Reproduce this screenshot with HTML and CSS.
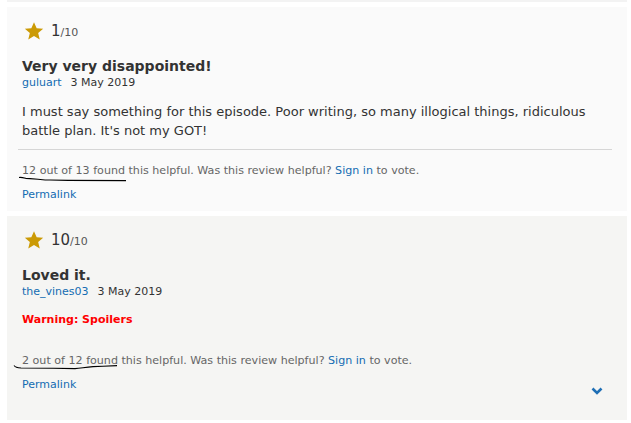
FILE: index.html
```html
<!DOCTYPE html>
<html>
<head>
<meta charset="utf-8">
<link rel="stylesheet" href="styles.css">
</head>
<body>
<div class="page">
  <div class="strip"></div>
  <div class="review review-odd">
    <div class="rating">
      <svg class="star" viewBox="0 0 24 24" width="20" height="20"><path d="M12 1.5l3.2 7.2 7.8.6-6 5.1 1.9 7.7L12 18l-6.9 4.1 1.9-7.7-6-5.1 7.8-.6z" fill="#cb9a05"/></svg>
      <span class="score">1</span><span class="outof">/10</span>
    </div>
    <div class="title">Very very disappointed!</div>
    <div class="meta"><a class="author">guluart</a><span class="date">3 May 2019</span></div>
    <div class="body">I must say something for this episode. Poor writing, so many illogical things, ridiculous battle plan. It's not my GOT!</div>
    <div class="divider"></div>
    <div class="helpful">12 out of 13 found this helpful. Was this review helpful? <a class="link">Sign in</a> to vote.
      <svg class="scribble s1" width="120" height="10" viewBox="0 0 120 10"><path d="M1 2.5 C3 2 5 2.6 8 3.4 L12 3.6 L20 4.2 C24 4.6 26 5 32 5 L50 5.4 L108 5.6" fill="none" stroke="#000" stroke-width="1.1"/></svg>
    </div>
    <div class="footer"><a class="link permalink">Permalink</a></div>
  </div>
  <div class="review review-even">
    <div class="rating">
      <svg class="star" viewBox="0 0 24 24" width="20" height="20"><path d="M12 1.5l3.2 7.2 7.8.6-6 5.1 1.9 7.7L12 18l-6.9 4.1 1.9-7.7-6-5.1 7.8-.6z" fill="#cb9a05"/></svg>
      <span class="score">10</span><span class="outof">/10</span>
    </div>
    <div class="title">Loved it.</div>
    <div class="meta"><a class="author">the_vines03</a><span class="date">3 May 2019</span></div>
    <div class="spoiler">Warning: Spoilers</div>
    <div class="helpful spaced">2 out of 12 found this helpful. Was this review helpful? <a class="link">Sign in</a> to vote.
      <svg class="scribble s2" width="110" height="10" viewBox="0 0 110 10"><path d="M1 1.5 C2 3 4 3.8 8 4 L40 4.3 L62 4.6 C68 4.4 72 3 80 2.6 L90 2.2 L104 1.6" fill="none" stroke="#000" stroke-width="1.1"/></svg>
    </div>
    <div class="footer"><a class="link permalink">Permalink</a>
      <svg class="chevron" width="12" height="8" viewBox="0 0 12 8"><path d="M1.5 1.5 L6 6 L10.5 1.5" fill="none" stroke="#1f6fb5" stroke-width="2.6"/></svg>
    </div>
  </div>
</div>
</body>
</html>
```

FILE: styles.css
```css
* { box-sizing: border-box; }
html, body { margin: 0; padding: 0; background: #ffffff; }
body {
  font-family: "DejaVu Sans", Verdana, sans-serif;
  color: #333333;
  width: 631px;
  height: 423px;
  overflow: hidden;
}
.page {
  padding-left: 7px;
  width: 627px;
}
.strip {
  height: 2px;
  background: #f3f3f3;
  margin-bottom: 5px;
}
.review {
  height: 204px;
  padding: 14px 24px 0 15px;
  display: flex;
  flex-direction: column;
}
.review-odd { background: #fafafa; }
.review-even { background: #f5f5f3; margin-top: 5px; }
.rating {
  display: flex;
  align-items: center;
  height: 20px;
  padding-left: 2px;
}
.star { display: block; margin-right: 7px; }
.score { font-size: 15px; color: #333; }
.outof { font-size: 11px; color: #555; margin-top: 2px; }
.title {
  margin-top: 16px;
  font-weight: bold;
  font-size: 14px;
  line-height: 18px;
  color: #333;
}
.meta {
  font-size: 11px;
  line-height: 16px;
}
.author { color: #136cb2; margin-right: 9px; }
.date { color: #333; }
.body {
  margin-top: 11px;
  font-size: 13px;
  line-height: 19px;
  color: #333;
}
.divider {
  margin: 9px -9px 0 -4px;
  height: 1px;
  background: #d6d6d6;
}
.helpful {
  position: relative;
  margin-top: 13px;
  font-size: 11.1px;
  line-height: 16px;
  color: #666666;
}
.helpful.spaced { margin-top: 25px; }
.link { color: #136cb2; }
.footer {
  margin-top: 8px;
  display: flex;
  justify-content: space-between;
  align-items: flex-start;
  font-size: 11px;
  line-height: 16px;
}
.chevron { display: block; margin-top: 10px; }
.spoiler {
  margin-top: 12px;
  font-size: 11px;
  line-height: 16px;
  font-weight: bold;
  color: #ff0000;
}
.scribble { position: absolute; display: block; }
.s1 { left: -4px; top: 12px; }
.s2 { left: -9px; top: 11px; }
```
